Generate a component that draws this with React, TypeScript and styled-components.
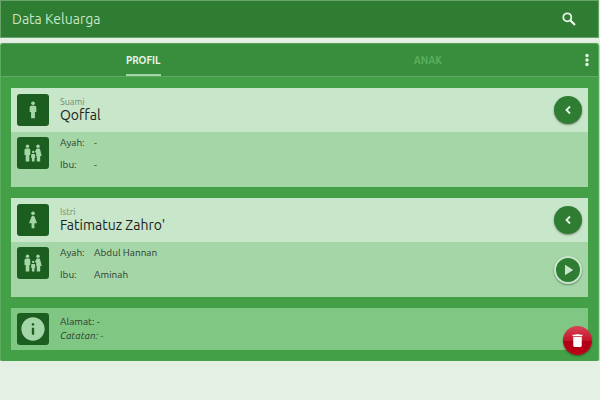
import React from "react";
import styled, { createGlobalStyle } from "styled-components";
import { MdPlayArrow, MdDelete, MdInfo } from "react-icons/md";

const GlobalStyle = createGlobalStyle`
  * { box-sizing: border-box; }
  body {
    margin: 0;
    background: #e5f0e5;
    color: #212121;
    font-family: Ubuntu, "Noto Sans", sans-serif;
    font-size: 10px;
  }
  button { border: 0; padding: 0; font: inherit; cursor: pointer; }
  h1, h2, p, dl, dd { margin: 0; font-weight: 400; }
`;

const Page = styled.div`
  display: flex;
  flex-direction: column;
  gap: 5px;
  padding-right: 1px;
`;

const Header = styled.header`
  display: flex;
  align-items: center;
  justify-content: space-between;
  height: 38px;
  padding: 0 21px 0 11px;
  background: #2e7d32;
  border: 1px solid #66a469;
  color: #c8e6c9;
`;

const Title = styled.h1`
  font-size: 14px;
  line-height: 18px;
`;

const IconButton = styled.button`
  display: flex;
  align-items: center;
  justify-content: center;
  background: none;
  color: #e8f5e9;
`;

const Card = styled.main`
  position: relative;
  background: #43a047;
  border-left: 1px solid #5bab5f;
  border-right: 1px solid #5bab5f;
  border-radius: 3px;
  box-shadow: 0 1px 2px rgba(0, 0, 0, 0.45);
`;

const TabBar = styled.nav`
  display: flex;
  height: 34px;
  background: #388e3c;
  border-top: 1px solid #5ca35f;
  border-bottom: 1px solid #62a866;
  border-radius: 3px 3px 0 0;
`;

const Tabs = styled.div`
  display: grid;
  flex: 1;
  grid-template-columns: 1fr 1fr;
  justify-items: center;
  margin-right: 6px;
`;

const Tab = styled.button<{ $active?: boolean }>`
  background: none;
  border-top: 2px solid transparent;
  border-bottom: 2px solid ${(p) => (p.$active ? "#a5d6a7" : "transparent")};
  color: ${(p) => (p.$active ? "#e8f5e9" : "#5aae5e")};
  font-weight: 700;
`;

const MenuButton = styled(IconButton)`
  width: 22px;
`;

const Content = styled.div`
  display: flex;
  flex-direction: column;
  gap: 11px;
  padding: 11px 10px;
`;

const Panel = styled.section`
  display: flex;
  flex-direction: column;
`;

const Row = styled.div<{ $tone: "light" | "medium" | "deep" }>`
  display: flex;
  align-items: center;
  gap: 11px;
  padding: 5px 6px;
  background: ${(p) =>
    ({ light: "#c8e6c9", medium: "#a5d6a7", deep: "#81c784" })[p.$tone]};
`;

const PersonRow = styled(Row)`
  height: 44px;
`;

const ParentsRow = styled(Row)`
  height: 55px;
  padding: 0 6px;
`;

const InfoRow = styled(Row)`
  height: 42px;
`;

const Tile = styled.div`
  display: flex;
  flex: none;
  align-items: center;
  justify-content: center;
  width: 32px;
  height: 32px;
  border-radius: 3px;
  background: #1b5e20;
  color: #a5d6a7;
`;

const ParentsTile = styled(Tile)`
  align-self: flex-start;
  margin-top: 5px;
`;

const Text = styled.div`
  flex: 1;
  min-width: 0;
`;

const Role = styled.p`
  color: #6f8f72;
  font-size: 9px;
  line-height: 10px;
`;

const Name = styled.h2`
  font-size: 14px;
  line-height: 16px;
`;

const Parents = styled.dl`
  display: grid;
  flex: 1;
  align-self: flex-start;
  grid-template-columns: 34px 1fr;
  line-height: 22px;
  color: #2c3b2d;
`;

const Note = styled.p<{ $italic?: boolean }>`
  line-height: 14px;
  color: #2c3b2d;
  font-style: ${(p) => (p.$italic ? "italic" : "normal")};
`;

const RoundButton = styled.button`
  display: flex;
  flex: none;
  align-items: center;
  justify-content: center;
  width: 28px;
  height: 28px;
  border-radius: 50%;
  background: #2e7d32;
  color: #e8f5e9;
  box-shadow: 0 1px 2px rgba(0, 0, 0, 0.4);
`;

const PlayButton = styled(RoundButton)`
  border: 2px solid #c8e6c9;
  color: #c8e6c9;
`;

const DeleteButton = styled(RoundButton)`
  position: absolute;
  right: 6px;
  bottom: 6px;
  width: 29px;
  height: 29px;
  background: linear-gradient(#d64556 0%, #c41529 50%, #ae0014 51%, #be0018 100%);
  color: #fff;
`;

const SearchIcon = () => (
  <svg width="16" height="16" viewBox="0 0 16 16" fill="none" stroke="currentColor" strokeWidth="1.8" aria-hidden="true">
    <circle cx="6.3" cy="6.3" r="4" />
    <path d="M9.400 9.400L14 14" strokeWidth="2.200" />
  </svg>
);

const MoreIcon = () => (
  <svg width="4" height="14" viewBox="0 0 4 14" fill="currentColor" aria-hidden="true">
    <circle cx="2" cy="2.500" r="1.700" />
    <circle cx="2" cy="7" r="1.700" />
    <circle cx="2" cy="11.500" r="1.700" />
  </svg>
);

const BackIcon = () => (
  <svg width="16" height="16" viewBox="0 0 16 16" fill="none" stroke="currentColor" strokeWidth="1.800" aria-hidden="true">
    <path d="M10 4.500L6.500 8l3.500 3.500" />
  </svg>
);

const HumanIcon = ({ kind }: { kind: "male" | "female" }) => (
  <svg width="20" height="20" viewBox="0 0 24 24" fill="currentColor" aria-hidden="true">
    <circle cx="12" cy="4" r="2.2" />
    {kind === "male" ? (
      <path d="M10 7h4a2 2 0 0 1 2 2v5.5h-1.700V22H9.700v-7.500H8V9a2 2 0 0 1 2-2z" />
    ) : (
      <path d="M10.300 22v-6H7.200l2.800-7.600a2.100 2.100 0 0 1 4 0L16.800 16h-3.100v6z" />
    )}
  </svg>
);

const FamilyIcon = () => (
  <svg width="18" height="18" viewBox="0 0 18 18" fill="currentColor" aria-hidden="true">
    <circle cx="3.500" cy="2.200" r="1.700" />
    <path d="M2 4.500h3A1.500 1.500 0 0 1 6.300 6v5H5.300v6.500H1.700V11H.500V6A1.500 1.500 0 0 1 2 4.500z" />
    <circle cx="9.200" cy="7.900" r="1.200" />
    <path d="M8.200 10h2a1 1 0 0 1 1 1v3h-.7v3.500H7.900V14h-.700v-3a1 1 0 0 1 1-1z" />
    <circle cx="14" cy="2.200" r="1.700" />
    <path d="M13.300 4.500h1.400c.8 0 1.200.5 1.500 1.200L17.700 12h-1.500v5.500h-3.400V12h-.6V8.800l-1.300-.9 1-2.200c.3-.8.700-1.200 1.400-1.200z" />
  </svg>
);

interface Person {
  role: string;
  name: string;
  kind: "male" | "female";
  father: string;
  mother: string;
  hasParents: boolean;
}

const people: Person[] = [
  { role: "Suami", name: "Qoffal", kind: "male", father: "-", mother: "-", hasParents: false },
  {
    role: "Istri",
    name: "Fatimatuz Zahro'",
    kind: "female",
    father: "Abdul Hannan",
    mother: "Aminah",
    hasParents: true,
  },
];

const PersonPanel = ({ person }: { person: Person }) => (
  <Panel>
    <PersonRow $tone="light">
      <Tile>
        <HumanIcon kind={person.kind} />
      </Tile>
      <Text>
        <Role>{person.role}</Role>
        <Name>{person.name}</Name>
      </Text>
      <RoundButton aria-label={`Tutup ${person.role}`}>
        <BackIcon />
      </RoundButton>
    </PersonRow>
    <ParentsRow $tone="medium">
      <ParentsTile>
        <FamilyIcon />
      </ParentsTile>
      <Parents>
        <dt>Ayah:</dt>
        <dd>{person.father}</dd>
        <dt>Ibu:</dt>
        <dd>{person.mother}</dd>
      </Parents>
      {person.hasParents && (
        <PlayButton aria-label="Buka orang tua">
          <MdPlayArrow size={18} />
        </PlayButton>
      )}
    </ParentsRow>
  </Panel>
);

export default function App() {
  return (
    <>
      <GlobalStyle />
      <Page>
        <Header>
          <Title>Data Keluarga</Title>
          <IconButton aria-label="Cari">
            <SearchIcon />
          </IconButton>
        </Header>
        <Card>
          <TabBar>
            <Tabs role="tablist">
              <Tab role="tab" aria-selected="true" $active>
                PROFIL
              </Tab>
              <Tab role="tab" aria-selected="false">
                ANAK
              </Tab>
            </Tabs>
            <MenuButton aria-label="Menu">
              <MoreIcon />
            </MenuButton>
          </TabBar>
          <Content>
            {people.map((person) => (
              <PersonPanel key={person.role} person={person} />
            ))}
            <InfoRow as="section" $tone="deep">
              <Tile>
                <MdInfo size={28} />
              </Tile>
              <Text>
                <Note>Alamat: -</Note>
                <Note $italic>Catatan: -</Note>
              </Text>
            </InfoRow>
          </Content>
          <DeleteButton aria-label="Hapus">
            <MdDelete size={17} />
          </DeleteButton>
        </Card>
      </Page>
    </>
  );
}
